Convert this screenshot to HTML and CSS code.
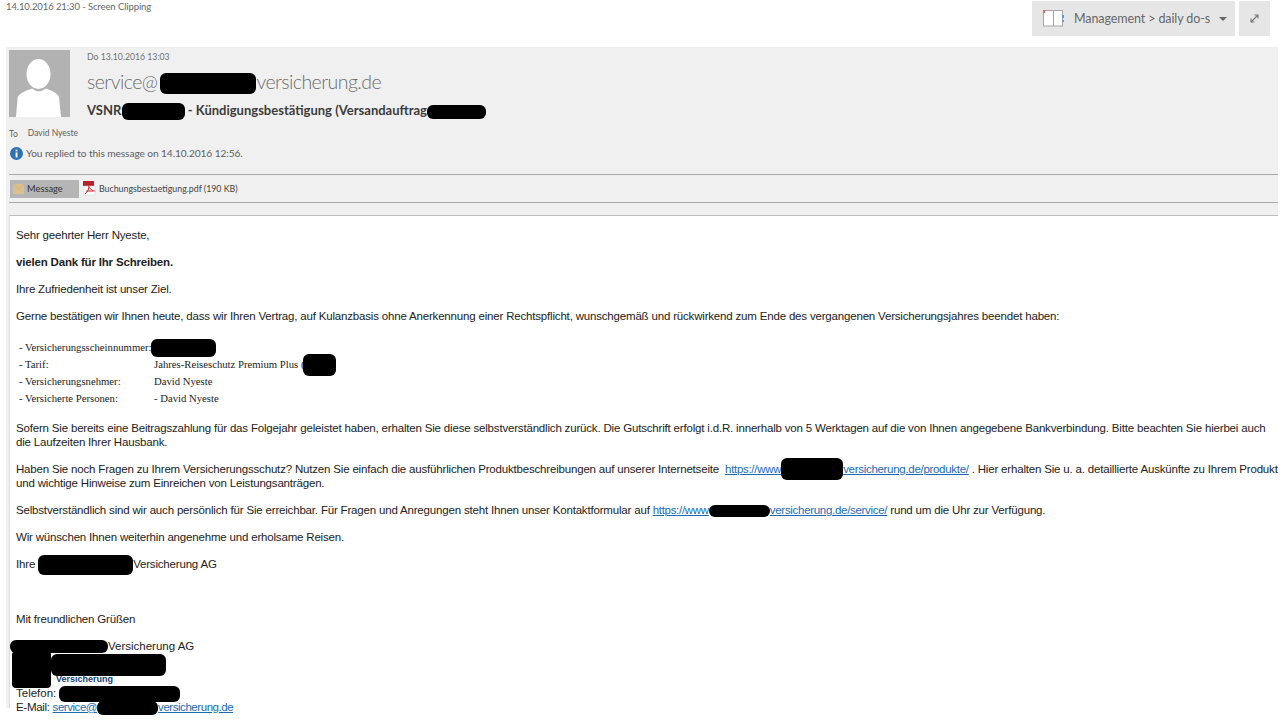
FILE: index.html
```html
<!DOCTYPE html>
<html lang="de">
<head>
  <meta charset="UTF-8" />
  <meta name="viewport" content="width=device-width, initial-scale=1.0"/>
  <title>Screen Clipping</title>
  <link rel="stylesheet" href="styles.css">
</head>
<body>
  <div class="topbar">
    <div class="clip-date">14.10.2016 21:30 - Screen Clipping</div>
    <div class="top-actions">
      <div class="notebook-btn">
        <svg class="notebook-icon" width="21" height="17" viewBox="0 0 21 17">
          <rect x="0.5" y="0.5" width="19" height="15.5" fill="#fff" stroke="#a5a5a5" stroke-width="1"/>
          <line x1="10.5" y1="1" x2="10.5" y2="16" stroke="#a5a5a5"/>
          <rect x="0" y="0" width="2" height="3" fill="#d9705a"/>
          <rect x="19" y="5" width="2" height="3" fill="#5a9bd4"/>
          <rect x="19" y="10" width="2" height="2" fill="#5a9bd4"/>
        </svg>
        <span class="notebook-name">Management &gt; daily do-s</span>
        <span class="caret"></span>
      </div>
      <div class="expand-btn">
        <svg width="9" height="9" viewBox="0 0 9 9">
          <path d="M1 8 L8 1 M4.5 1 H8 V4.5 M1 4.5 V8 H4.5" fill="none" stroke="#777" stroke-width="1.1"/>
        </svg>
      </div>
    </div>
  </div>

  <div class="mail">
    <div class="mail-head">
      <div class="sender-row">
        <svg class="avatar" width="61" height="67" viewBox="0 0 61 67">
          <rect width="61" height="67" fill="#b2b2b2"/>
          <ellipse cx="29.5" cy="24" rx="12" ry="15" fill="#fff"/>
          <path d="M7 67 L8.7 47 Q10 43 23 38.5 Q29.5 44 37 38.5 Q49 43 50 47 L52 67 Z" fill="#fff"/>
        </svg>
        <div class="sender-info">
          <div class="sent-date">Do 13.10.2016 13:03</div>
          <div class="sender">service@<span class="blot blot-sender"></span>versicherung.de</div>
          <div class="subject">VSNR:<span class="blot blot-vsnr"></span> - Kündigungsbestätigung (Versandauftrag<span class="blot blot-order"></span></div>
        </div>
      </div>
      <div class="recipient"><span class="to">To</span><span>David Nyeste</span></div>
      <div class="notice">
        <svg width="13" height="13" viewBox="0 0 13 13">
          <circle cx="6.5" cy="6.5" r="6.5" fill="#2a72b5"/>
          <rect x="5.6" y="5.4" width="1.9" height="5" fill="#fff"/>
          <rect x="5.6" y="2.6" width="1.9" height="1.8" fill="#fff"/>
        </svg>
        <span>You replied to this message on 14.10.2016 12:56.</span>
      </div>
      <div class="attachments">
        <div class="tab-message">
          <svg width="11" height="10" viewBox="0 0 11 10">
            <rect width="11" height="10" fill="#d9c08e"/>
            <path d="M0 0 L5.5 5 L11 0" fill="none" stroke="#d2b57c"/>
          </svg>
          <span>Message</span>
        </div>
        <div class="attachment">
          <svg width="13" height="15" viewBox="0 0 13 15">
            <rect x="0" y="0" width="11" height="5" fill="#b4232a"/>
            <rect x="1" y="5" width="11" height="9" fill="#fff" stroke="#ccc" stroke-width="0.5"/>
            <path d="M6 3 C6 8 5 11 2 13 M6 6 C8 9 10 10 12 10 M3 10 H10" fill="none" stroke="#c4262e" stroke-width="1"/>
          </svg>
          <span>Buchungsbestaetigung.pdf (190 KB)</span>
        </div>
      </div>
    </div>

    <div class="mail-body">
      <p>Sehr geehrter Herr Nyeste,</p>
      <p><b>vielen Dank für Ihr Schreiben.</b></p>
      <p>Ihre Zufriedenheit ist unser Ziel.</p>
      <p>Gerne bestätigen wir Ihnen heute, dass wir Ihren Vertrag, auf Kulanzbasis ohne Anerkennung einer Rechtspflicht, wunschgemäß und rückwirkend zum Ende des vergangenen Versicherungsjahres beendet haben:</p>

      <table class="contract">
        <tr><td>- Versicherungsscheinnummer:</td><td><span class="blot blot-number"></span></td></tr>
        <tr><td>- Tarif:</td><td>Jahres-Reiseschutz Premium Plus (<span class="blot blot-tarif"></span></td></tr>
        <tr><td>- Versicherungsnehmer:</td><td>David Nyeste</td></tr>
        <tr><td>- Versicherte Personen:</td><td>- David Nyeste</td></tr>
      </table>

      <p>Sofern Sie bereits eine Beitragszahlung für das Folgejahr geleistet haben, erhalten Sie diese selbstverständlich zurück. Die Gutschrift erfolgt i.d.R. innerhalb von 5 Werktagen auf die von Ihnen angegebene Bankverbindung. Bitte beachten Sie hierbei auch die Laufzeiten Ihrer Hausbank.</p>
      <p>Haben Sie noch Fragen zu Ihrem Versicherungsschutz? Nutzen Sie einfach die ausführlichen Produktbeschreibungen auf unserer Internetseite <a class="site-link" href="#">https://www<span class="blot blot-link1"></span>versicherung.de/produkte/</a> . Hier erhalten Sie u. a. detaillierte Auskünfte zu Ihrem Produkt und wichtige Hinweise zum Einreichen von Leistungsanträgen.</p>
      <p>Selbstverständlich sind wir auch persönlich für Sie erreichbar. Für Fragen und Anregungen steht Ihnen unser Kontaktformular auf <a href="#">https://www<span class="blot blot-link2"></span>versicherung.de/service/</a> rund um die Uhr zur Verfügung.</p>
      <p>Wir wünschen Ihnen weiterhin angenehme und erholsame Reisen.</p>
      <p>Ihre <span class="blot blot-company"></span>Versicherung AG</p>
      <p class="greeting">Mit freundlichen Grüßen</p>

      <div class="signature">
        <div class="sig-name"><span class="blot blot-sig-name"></span>Versicherung AG</div>
        <div class="sig-logo">
          <span class="blot blot-logo-left"></span>
          <span class="blot blot-logo-right"></span>
          <span class="logo-word">Versicherung</span>
        </div>
        <div>Telefon: <span class="blot blot-phone"></span></div>
        <div class="sig-mail">E-Mail: <a href="#">service@<span class="blot blot-mail"></span>versicherung.de</a></div>
      </div>
    </div>
  </div>
</body>
</html>
```

FILE: styles.css
```css
:root {
  --panel: #f0f0f0;
  --line: #a9a9a9;
  --ui-text: #5f5f5f;
  --link: #1a6bb5;
}

html, body {
  height: 720px;
  overflow: hidden;
}

body {
  margin: 0;
  background: #fff;
  font-family: Lato, "Open Sans", sans-serif;
  color: #444;
}

.topbar {
  display: flex;
  justify-content: space-between;
  height: 47px;
}

.clip-date {
  padding: 0 0 0 6px;
  font-size: 9.5px;
  letter-spacing: -0.1px;
  line-height: 14px;
  color: #666;
}

.top-actions {
  display: flex;
  gap: 4px;
  padding: 1px 10px 0 0;
}

.notebook-btn {
  display: flex;
  align-items: center;
  width: 203px;
  height: 35px;
  box-sizing: border-box;
  padding-left: 11px;
  background: #e6e6e6;
}

.notebook-name {
  margin-left: 10px;
  font-size: 12.5px;
  letter-spacing: -0.1px;
  color: #666;
  white-space: nowrap;
}

.caret {
  margin-left: 9px;
  border-left: 4px solid transparent;
  border-right: 4px solid transparent;
  border-top: 4px solid #666;
}

.expand-btn {
  display: flex;
  align-items: center;
  justify-content: center;
  width: 31px;
  height: 35px;
  background: #e6e6e6;
}

.mail {
  margin: 0 2px 0 6px;
  background: var(--panel);
  padding-top: 3px;
}

.mail-head {
  padding-left: 3px;
  height: 165px;
}

.sender-row {
  display: flex;
}

.sender-info {
  margin-left: 17px;
}

.sent-date {
  font-size: 8.7px;
  line-height: 14px;
  color: #707070;
}

.sender {
  margin-top: 4px;
  font-size: 19.5px;
  letter-spacing: -0.55px;
  font-weight: 300;
  line-height: 28px;
  color: #6c6c6c;
  white-space: nowrap;
}

.subject {
  margin-top: 6px;
  font-size: 13px;
  line-height: 17px;
  font-weight: 700;
  color: #3c3c3c;
  white-space: nowrap;
}

.recipient {
  display: flex;
  gap: 10px;
  margin-top: 6px;
  font-size: 8.5px;
  line-height: 14px;
  color: var(--ui-text);
}

.to {
  margin-top: 1px;
}

.notice {
  display: flex;
  align-items: center;
  gap: 3px;
  margin: 5px 0 0 1px;
  font-size: 10.2px;
  letter-spacing: -0.1px;
  line-height: 14px;
  color: var(--ui-text);
}

.attachments {
  display: flex;
  align-items: center;
  margin-top: 14px;
  height: 27px;
  border-top: 1px solid var(--line);
  border-bottom: 1px solid var(--line);
  font-size: 8.8px;
  color: #444;
}

.tab-message {
  display: flex;
  align-items: center;
  gap: 3px;
  width: 69px;
  height: 18px;
  margin-left: 1px;
  box-sizing: border-box;
  padding-left: 3px;
  font-size: 9.3px;
  background: #b5b5b5;
  color: #333;
}

.attachment {
  display: flex;
  align-items: center;
  gap: 3px;
  margin-left: 4px;
}

.mail-body {
  margin-left: 3px;
  padding: 12.5px 0 0 6px;
  height: 493px;
  box-sizing: border-box;
  background: #fff;
  border-top: 1px solid #bbb;
  border-left: 1px solid #ddd;
  font-family: "Liberation Sans", Arial, sans-serif;
  font-size: 11.5px;
  letter-spacing: -0.18px;
  line-height: 13.6px;
  color: #222;
}

.mail-body p {
  margin: 0 0 13.6px;
}

.mail-body a {
  color: var(--link);
  letter-spacing: -0.3px;
}

.site-link {
  margin-left: 3px;
}

.contract {
  border-collapse: collapse;
  margin: 15.5px 0 15px 3px;
  font-family: "Liberation Serif", "Times New Roman", serif;
  font-size: 10.7px;
  letter-spacing: 0;
  line-height: 17px;
}

.contract td {
  padding: 0;
}

.contract td:first-child {
  width: 135px;
  white-space: nowrap;
}

.greeting {
  margin-top: 41px !important;
}

.signature {
  margin: 13px 0 0 0;
  letter-spacing: 0;
  line-height: 13.5px;
}

.sig-logo {
  position: relative;
  height: 28px;
  margin-top: 6px;
}

.logo-word {
  position: absolute;
  left: 40px;
  top: 14px;
  font-size: 9px;
  font-weight: bold;
  color: #173f75;
}

.sig-mail {
  letter-spacing: -0.3px;
}

.sig-mail a {
  letter-spacing: -0.45px;
}

.blot {
  display: inline-block;
  background: #000;
  border-radius: 6px;
  vertical-align: middle;
}

.blot-sender { width: 96px; height: 21px; margin: -3px 0 -1px 3px; }
.blot-vsnr { width: 63px; height: 17px; margin-left: -3px; }
.blot-order { width: 59px; height: 14px; }
.blot-number { width: 65px; height: 18px; margin: -4px 0 -2px -3px; }
.blot-tarif { width: 33px; height: 22px; margin: -6px 0 -4px -2px; }
.blot-link1 { width: 62px; height: 22px; margin: -6px 0 -4px; }
.blot-link2 { width: 61px; height: 12px; }
.blot-company { width: 95px; height: 20px; margin: -4px 0; }
.blot-sig-name { width: 98px; height: 13px; margin-left: -6px; }
.blot-logo-left { position: absolute; left: -4px; top: -8px; width: 39px; height: 37px; border-radius: 4px; }
.blot-logo-right { position: absolute; left: 35px; top: -5px; width: 115px; height: 22px; }
.blot-phone { width: 121px; height: 16px; margin: -2px 0; }
.blot-mail { width: 61px; height: 14px; margin: -2px 0; }
```
